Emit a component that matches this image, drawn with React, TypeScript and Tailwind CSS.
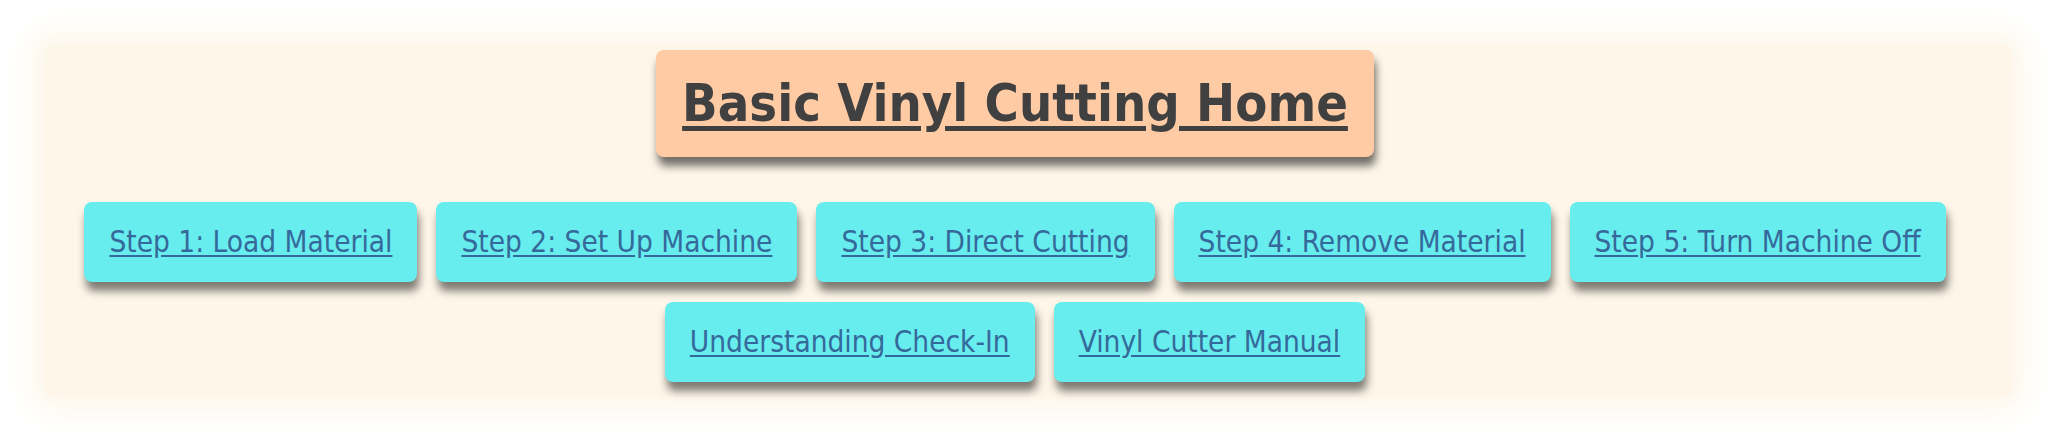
import React from "react";

const links = [
  "Step 1: Load Material",
  "Step 2: Set Up Machine",
  "Step 3: Direct Cutting",
  "Step 4: Remove Material",
  "Step 5: Turn Machine Off",
  "Understanding Check-In",
  "Vinyl Cutter Manual",
];

export default function App() {
  return (
    <div
      className="min-h-[445px] w-full bg-white pt-[45px] px-[45px]"
      style={{ fontFamily: '"DejaVu Sans Condensed", "DejaVu Sans", sans-serif' }}
    >
      <div className="h-[352px] rounded-lg bg-[#fef6e8] shadow-[0_0_30px_12px_#fef6e8] pt-[5px] pr-[27px] flex flex-col items-center">
        <div className="rounded-lg bg-[#ffcba5] px-[26px] py-[23px] shadow-[2px_9px_9px_rgba(0,0,0,0.55)]">
          <a
            href="#"
            className="block text-[52px] leading-[61px] font-bold text-[#404040] underline underline-offset-[5px]"
          >
            Basic Vinyl Cutting Home
          </a>
        </div>
        <div className="mt-[45px] flex w-full flex-wrap justify-center gap-x-[19px] gap-y-[20px]">
          {links.map((l) => (
            <div
              key={l}
              className="rounded-lg bg-[#67eded] px-[25px] py-[23px] shadow-[2px_9px_9px_rgba(0,0,0,0.5)]"
            >
              <a
                href="#"
                className="block text-[29.5px] leading-[34px] text-[#36699b] underline underline-offset-[3px]"
              >
                {l}
              </a>
            </div>
          ))}
        </div>
      </div>
    </div>
  );
}
